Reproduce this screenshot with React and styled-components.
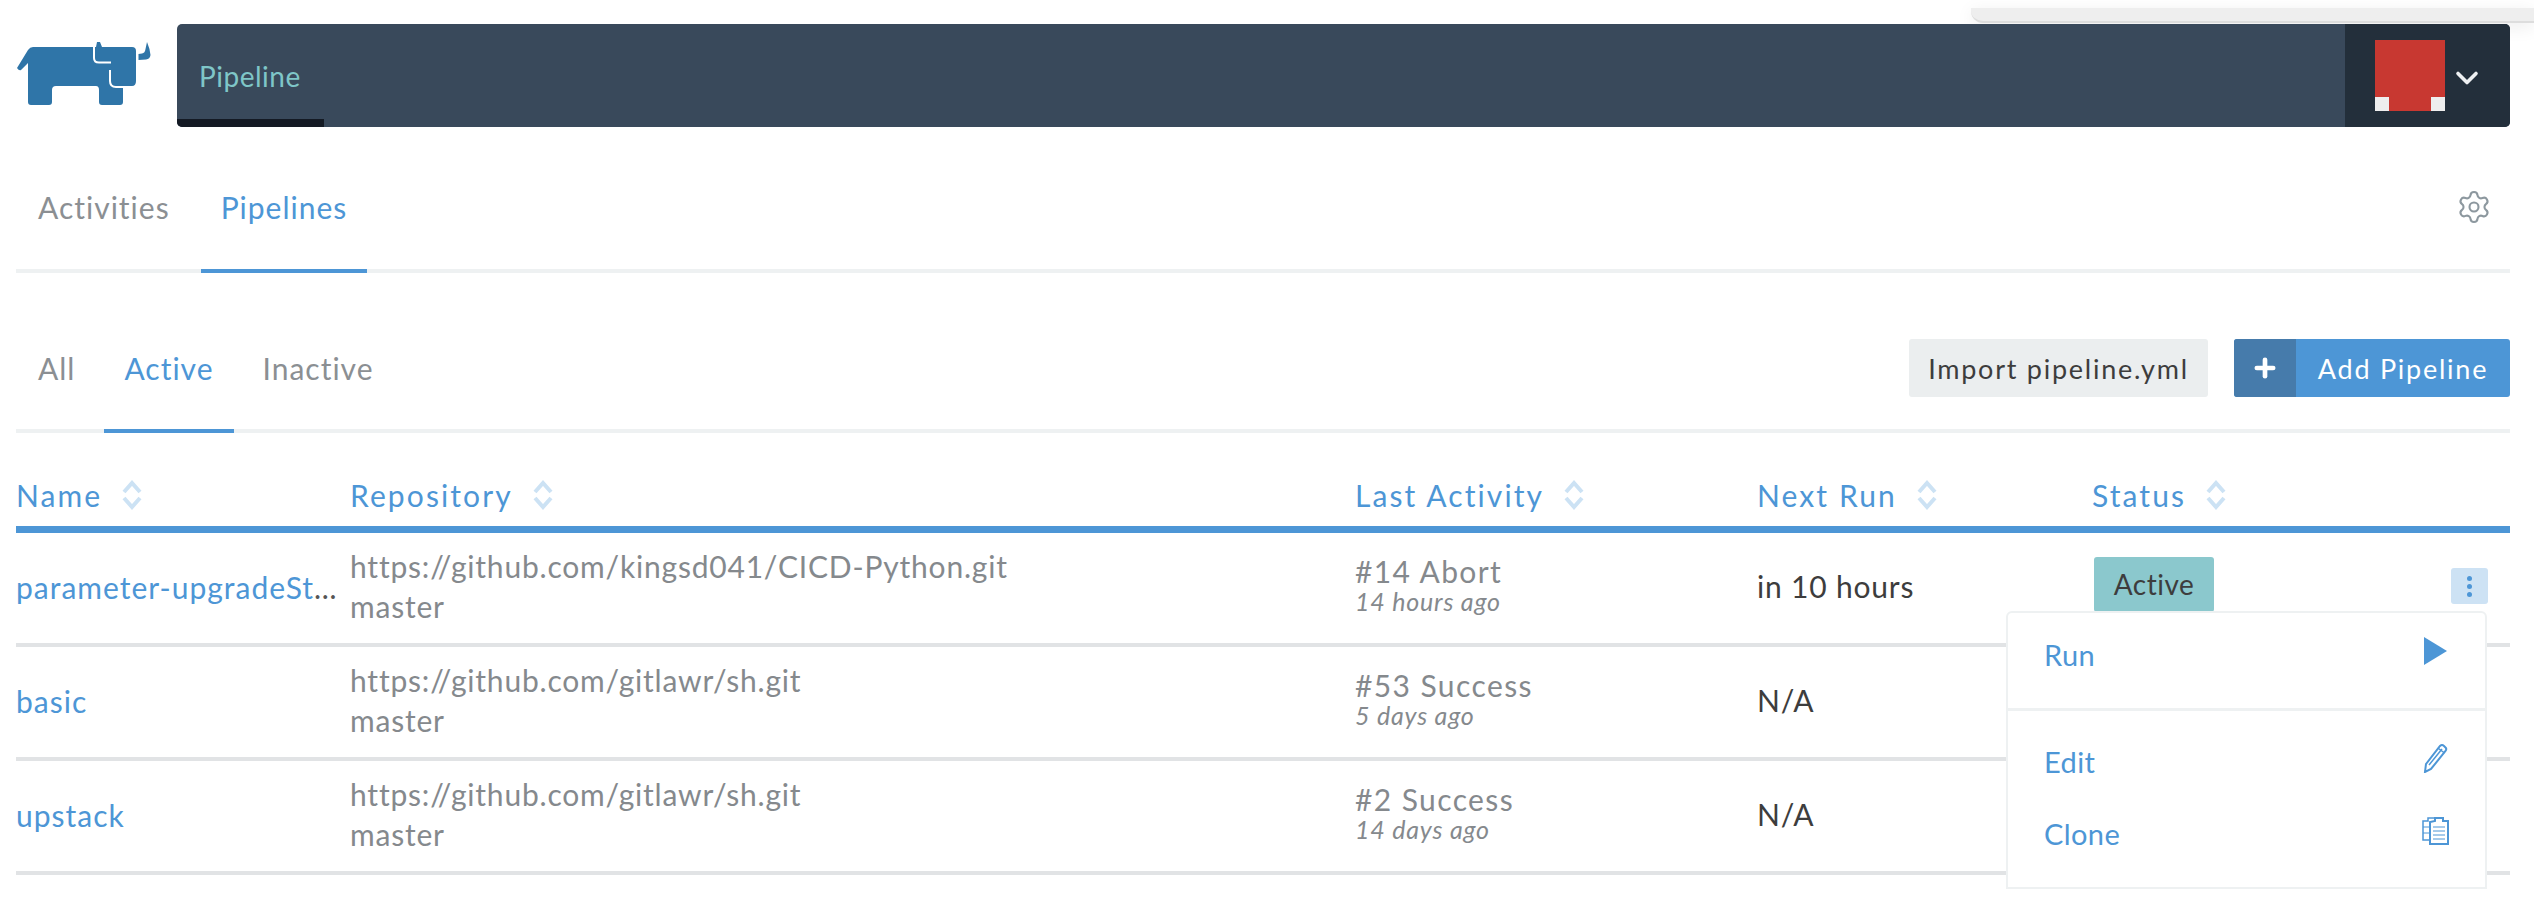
import React from "react";
import styled, { createGlobalStyle } from "styled-components";
import { Settings, ChevronDown, Plus } from "lucide-react";

const blue = "#4d96d6";

const GlobalStyle = createGlobalStyle`
  html, body { margin: 0; padding: 0; background: #fff; }
  body { font-family: Lato, "Noto Sans", sans-serif; color: #3d3d3d; overflow: hidden; }
  * { box-sizing: border-box; }
`;

const Page = styled.div`
  position: relative;
  width: 2534px;
  height: 916px;
  padding: 24px 24px 0 16px;
`;

const TopSliver = styled.div`
  position: absolute;
  top: 8px;
  right: 0;
  width: 563px;
  height: 15px;
  background: #eee;
  border-bottom: 2px solid #ddd;
  border-bottom-left-radius: 12px;
  box-shadow: 0 4px 18px rgba(0, 0, 0, 0.08);
`;

const Header = styled.header`
  display: flex;
  height: 103px;
  gap: 26px;
  position: relative;
`;

const Logo = styled.svg`
  width: 135px;
  height: 64px;
  margin-top: 17px;
  flex: none;
`;

const NavBar = styled.nav`
  flex: 1;
  display: flex;
  justify-content: space-between;
  background: #39495b;
  border-radius: 5px;
  overflow: hidden;
`;

const NavItem = styled.div`
  width: 147px;
  height: 100%;
  padding: 8px 0 0 22px;
  display: flex;
  align-items: center;
  color: #7fc6c8;
  font-size: 28px;
  letter-spacing: 0.5px;
  border-bottom: 8px solid #141a24;
`;

const UserBox = styled.div`
  width: 165px;
  background: #232f3b;
  display: flex;
  align-items: center;
  padding-left: 30px;
  gap: 4px;
  color: #eef0f2;
`;

const Avatar = styled.svg`
  width: 70px;
  height: 71px;
  flex: none;
`;

const Chevron = styled(ChevronDown)`
  margin-top: 4px;
`;

const TabRow = styled.div`
  display: flex;
  align-items: center;
  justify-content: space-between;
  height: ${(p) => p.$height}px;
  padding-top: ${(p) => p.$top}px;
  border-bottom: 4px solid #eef1f2;
`;

const Tabs = styled.div`
  display: flex;
  height: 100%;
  padding-left: 2px;
  gap: ${(p) => p.$gap}px;
`;

const Tab = styled.div`
  display: flex;
  align-items: center;
  padding: 0 20px;
  height: calc(100% + 4px);
  font-size: 30px;
  letter-spacing: 1px;
  color: ${(p) => (p.$active ? blue : "#8b8f93")};
  border-bottom: 4px solid ${(p) => (p.$active ? blue : "transparent")};
`;

const Gear = styled(Settings)`
  color: #8d989f;
  margin-right: 18px;
`;

const Actions = styled.div`
  display: flex;
  gap: 26px;
`;

const ImportButton = styled.div`
  width: 299px;
  height: 58px;
  display: flex;
  align-items: center;
  justify-content: center;
  background: #ebeeef;
  border-radius: 3px;
  font-size: 27px;
  letter-spacing: 1.75px;
  color: #3d3d3d;
`;

const AddButton = styled.div`
  width: 276px;
  height: 58px;
  display: flex;
  background: ${blue};
  border-radius: 3px;
  overflow: hidden;
  color: #fff;
  font-size: 27px;
  letter-spacing: 1.75px;
`;

const AddIcon = styled.div`
  width: 62px;
  background: #467bab;
  display: flex;
  align-items: center;
  justify-content: center;
`;

const AddLabel = styled.div`
  flex: 1;
  display: flex;
  align-items: center;
  justify-content: center;
`;

const columns = "334px 1005px 402px 335px 1fr";

const HeadRow = styled.div`
  display: grid;
  grid-template-columns: ${columns};
  height: 100px;
  padding-top: 31px;
  align-items: center;
  border-bottom: 7px solid ${blue};
`;

const HeadCell = styled.div`
  display: flex;
  align-items: center;
  gap: 20px;
  color: ${blue};
  font-size: 30px;
  letter-spacing: 2.1px;
`;

const SortIcon = styled.svg`
  width: 20px;
  height: 30px;
  flex: none;
`;

const Row = styled.div`
  display: grid;
  grid-template-columns: ${columns};
  height: 114px;
  align-items: center;
  border-bottom: 4px solid #e1e3e5;
`;

const NameCell = styled.div`
  color: #555;
  font-size: 30px;
  letter-spacing: 1px;
  white-space: nowrap;
  overflow: hidden;
  text-overflow: ellipsis;
  margin-top: -2px;
`;

const NameLink = styled.span`
  color: ${blue};
`;

const Stack = styled.div`
  display: flex;
  flex-direction: column;
  color: #85898d;
  line-height: 40px;
  font-size: 30px;
  letter-spacing: 0.8px;
  margin-top: -4px;
`;

const Activity = styled.div`
  display: flex;
  flex-direction: column;
  color: #85898d;
  font-size: 30px;
  line-height: 34px;
  margin-top: -8px;
  letter-spacing: 1.4px;
`;

const Ago = styled.span`
  font-style: italic;
  font-size: 25px;
  line-height: 26px;
  letter-spacing: 0.8px;
`;

const NextRun = styled.div`
  color: #3d3d3d;
  font-size: 30px;
  letter-spacing: 0.8px;
  margin-top: -4px;
`;

const StatusCell = styled.div`
  display: flex;
  align-items: center;
  justify-content: space-between;
  padding: 0 22px 0 2px;
`;

const Badge = styled.div`
  width: 120px;
  height: 55px;
  margin-bottom: 8px;
  display: flex;
  align-items: center;
  justify-content: center;
  background: #8bc8cd;
  border-radius: 3px;
  font-size: 28px;
  letter-spacing: 0.5px;
  color: #3d3d3d;
`;

const Kebab = styled.div`
  width: 37px;
  height: 36px;
  margin-bottom: 4px;
  display: flex;
  flex-direction: column;
  align-items: center;
  justify-content: center;
  gap: 3px;
  background: #cde2f4;
  border-radius: 3px;
`;

const KebabDot = styled.span`
  width: 5px;
  height: 5px;
  border-radius: 50%;
  background: ${blue};
`;

const Menu = styled.div`
  position: absolute;
  left: 2006px;
  top: 611px;
  width: 481px;
  height: 278px;
  background: #fff;
  border: 2px solid #eef1f2;
  border-radius: 6px 6px 0 0;
`;

const MenuSection = styled.div`
  display: flex;
  flex-direction: column;
  padding: ${(p) => p.$pad};
  border-bottom: ${(p) => (p.$divided ? "3px solid #eef1f2" : "0")};
`;

const MenuItem = styled.div`
  display: flex;
  align-items: center;
  justify-content: space-between;
  height: 72px;
  padding: 0 36px;
  color: ${blue};
  font-size: 29px;
  letter-spacing: 0.4px;
`;

const MenuIcon = styled.svg`
  width: 28px;
  height: 30px;
  margin-top: -6px;
  flex: none;
`;

const Sort = () => (
  <SortIcon viewBox="0 0 20 30" fill="none" stroke="#cce2f4" strokeWidth="4">
    <path d="M2 12 L10 3 L18 12" />
    <path d="M2 18 L10 27 L18 18" />
  </SortIcon>
);

const pipelines = [
  { name: "parameter-upgradeStack", repo: "https://github.com/kingsd041/CICD-Python.git", act: "#14 Abort", ago: "14 hours ago", next: "in 10 hours", status: true },
  { name: "basic", repo: "https://github.com/gitlawr/sh.git", act: "#53 Success", ago: "5 days ago", next: "N/A" },
  { name: "upstack", repo: "https://github.com/gitlawr/sh.git", act: "#2 Success", ago: "14 days ago", next: "N/A" },
];

const App = () => {
  return (
    <Page>
      <GlobalStyle />
      <TopSliver />
      <Header>
        <Logo viewBox="0 0 135 64">
          <path fill="#2f75a8" d="M1 27 L12 9 Q14 6 17 6 L80 6 L81 1 L84 1 L86 6 L116 6 Q120 6 120 10 L120 40 Q120 45 116 45 L107 45 L107 61 Q107 64 104 64 L86 64 Q83 64 83 61 L83 49 Q83 45 80 45 L40 45 Q36 45 36 49 L36 61 Q36 64 33 64 L15 64 Q12 64 12 61 L12 22 L5 29 Q3 30 1 27 Z" />
          <path fill="none" stroke="#fff" strokeWidth="2" d="M78 5 L78 17 Q78 21.5 83 21.5 L95 21.5" />
          <path fill="none" stroke="#fff" strokeWidth="2" d="M94 29 L94 40 Q94 46 100 46 L108 46" />
          <path fill="#2f75a8" d="M131 1 Q134 8 134.5 14 Q134 18 130 18.5 L122.5 19 L122.5 13 L126 12.5 Q129 12 129.5 8 Z" />
        </Logo>
        <NavBar>
          <NavItem>Pipeline</NavItem>
          <UserBox>
            <Avatar viewBox="0 0 70 71">
              <rect width="70" height="71" fill="#c83831" />
              <rect y="57" width="14" height="14" fill="#eee" />
              <rect x="56" y="57" width="14" height="14" fill="#eee" />
            </Avatar>
            <Chevron size={36} strokeWidth={2.4} />
          </UserBox>
        </NavBar>
      </Header>

      <TabRow $height={146} $top={18}>
        <Tabs $gap={11}>
          <Tab>Activities</Tab>
          <Tab $active>Pipelines</Tab>
        </Tabs>
        <Gear size={36} strokeWidth={1.4} />
      </TabRow>

      <TabRow $height={160} $top={34}>
        <Tabs $gap={9}>
          <Tab>All</Tab>
          <Tab $active>Active</Tab>
          <Tab>Inactive</Tab>
        </Tabs>
        <Actions>
          <ImportButton>Import pipeline.yml</ImportButton>
          <AddButton>
            <AddIcon><Plus size={28} strokeWidth={4} /></AddIcon>
            <AddLabel>Add Pipeline</AddLabel>
          </AddButton>
        </Actions>
      </TabRow>

      <HeadRow>
        <HeadCell>Name <Sort /></HeadCell>
        <HeadCell>Repository <Sort /></HeadCell>
        <HeadCell>Last Activity <Sort /></HeadCell>
        <HeadCell>Next Run <Sort /></HeadCell>
        <HeadCell>Status <Sort /></HeadCell>
      </HeadRow>

      {pipelines.map((p) => (
        <Row key={p.act}>
          <NameCell><NameLink>{p.name}</NameLink></NameCell>
          <Stack>
            <span>{p.repo}</span>
            <span>master</span>
          </Stack>
          <Activity>
            <span>{p.act}</span>
            <Ago>{p.ago}</Ago>
          </Activity>
          <NextRun>{p.next}</NextRun>
          <StatusCell>
            {p.status && <Badge>Active</Badge>}
            {p.status && (
              <Kebab>
                <KebabDot />
                <KebabDot />
                <KebabDot />
              </Kebab>
            )}
          </StatusCell>
        </Row>
      ))}

      <Menu>
        <MenuSection $pad="5px 0 18px" $divided>
          <MenuItem>
            Run
            <MenuIcon viewBox="0 0 28 30"><path fill={blue} d="M3 1 L26 15 L3 29 Z" /></MenuIcon>
          </MenuItem>
        </MenuSection>
        <MenuSection $pad="14px 0 0">
          <MenuItem>
            Edit
            <MenuIcon viewBox="0 0 28 30" fill="none" stroke={blue} strokeWidth="2">
              <path d="M5 21 L19 3 Q21 1 23 3 L24.5 4.5 Q26 6 24.5 8 L10 26 L4 29 Z" />
              <path d="M8 22 L21 6 M17.5 5.5 L23.5 10" strokeWidth="1.5" />
            </MenuIcon>
          </MenuItem>
          <MenuItem>
            Clone
            <MenuIcon viewBox="0 0 28 30" fill="none" stroke={blue} strokeWidth="2">
              <path d="M9 7 L9 29 L27 29 L27 6 L22 6 L22 3 L14 3 L14 6 Z" />
              <path d="M9 25 L2 25 L2 6 L7 6 L7 3 L14 3" strokeWidth="1.5" />
              <path d="M12 12 H24 M12 16 H24 M12 20 H24 M12 24 H24 M2 12 H9 M2 18 H9" strokeWidth="1" />
            </MenuIcon>
          </MenuItem>
        </MenuSection>
      </Menu>
    </Page>
  );
};

export default App;
